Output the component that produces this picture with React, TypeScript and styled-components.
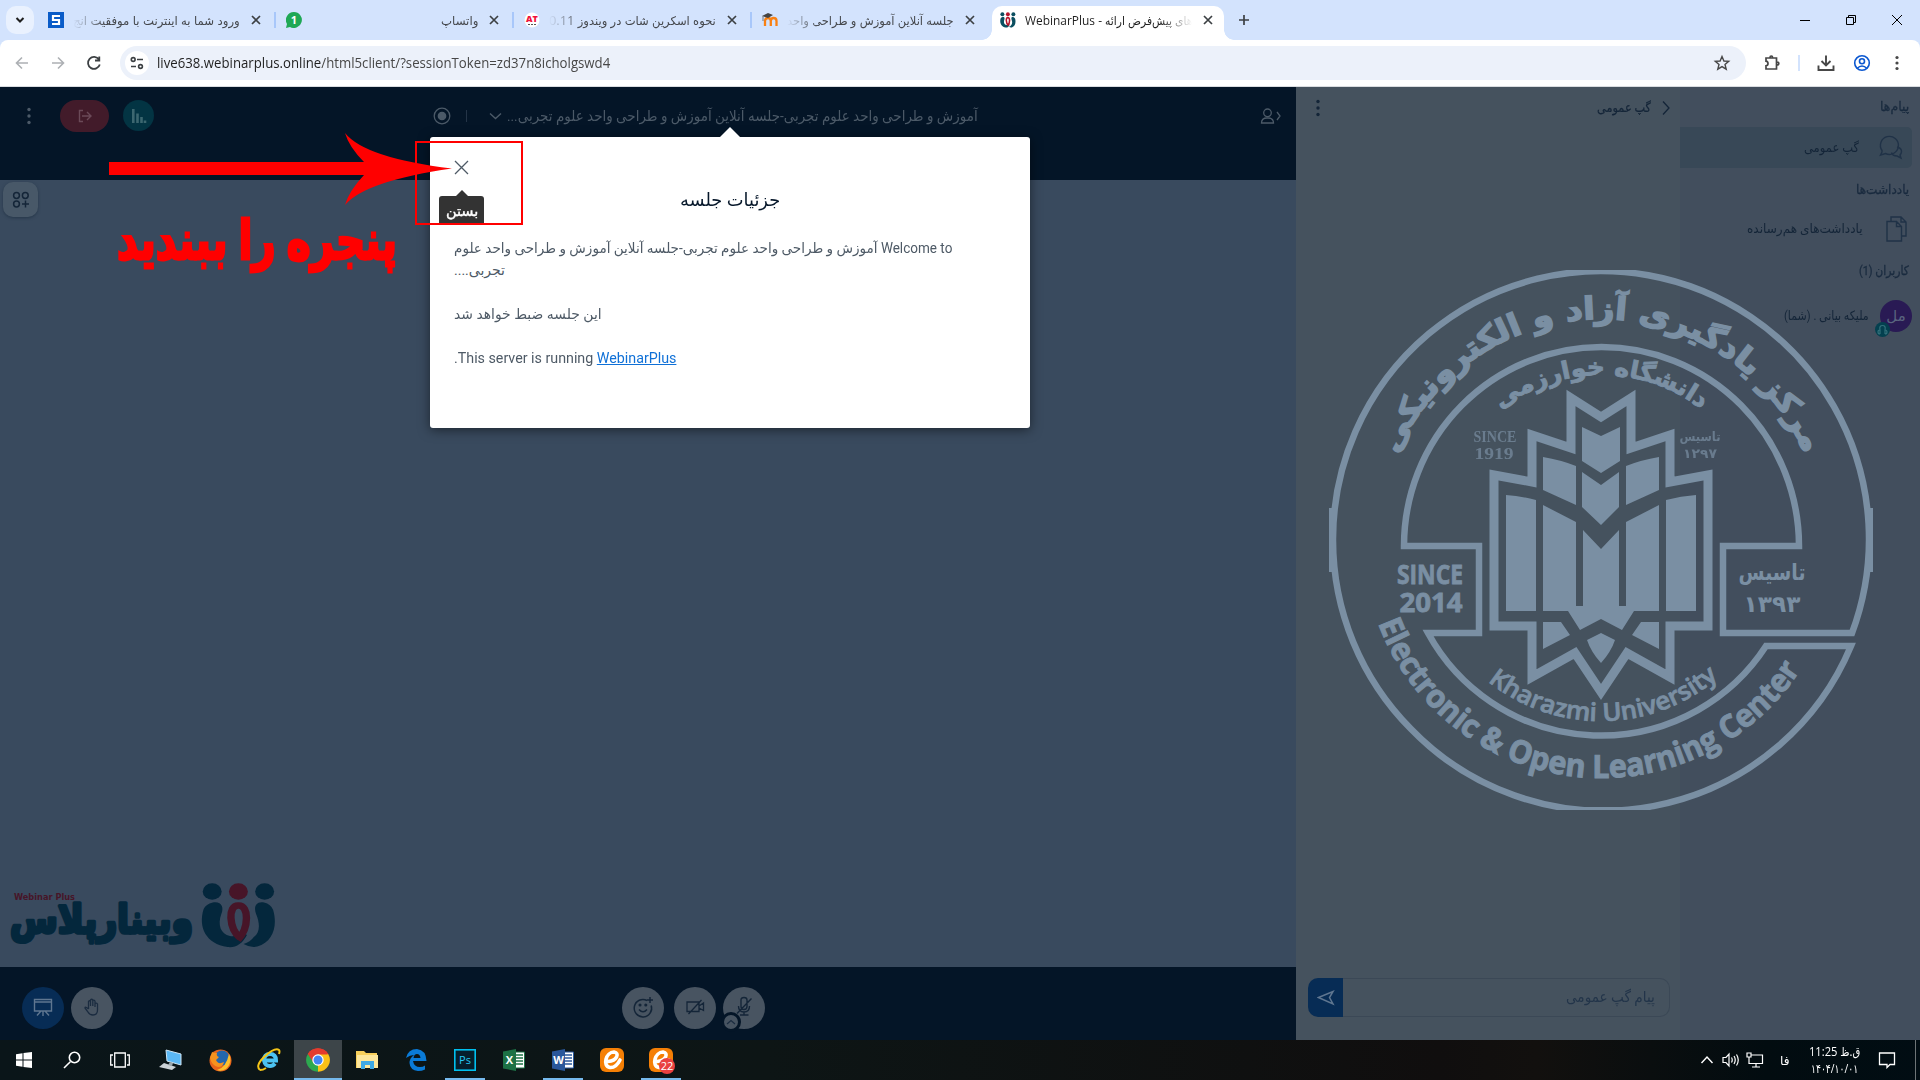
import React, { useLayoutEffect, useRef, useState } from "react";
import styled, { createGlobalStyle, css } from "styled-components";

const uiFont = `"Open Sans", "DejaVu Sans Condensed", "DejaVu Sans", sans-serif`;
const appFont = `Roboto, "DejaVu Sans", sans-serif`;

const c = {
  navy: "#041527",
  stage: "#394a5e",
  chat: "#45525e",
  users: "#424e5d",
  dimText: "#4c5a68",
  ink: "#142538",
  mark: "#7a8fa3",
  teal: "#04273c",
  wine: "#471528",
  blue: "#072c55",
  red: "#ff0000",
};

const Global = createGlobalStyle`
  html, body { margin: 0; padding: 0; overflow: hidden; }
  *, *::before, *::after { box-sizing: border-box; }
  svg { display: block; flex: none; }
`;

/* ---------- text set to an exact measure ---------- */
const FitBox = styled.span<{ $w: number }>`
  display: block;
  flex: none;
  direction: ltr;
  width: ${(p) => p.$w}px;
  white-space: nowrap;
`;
const FitInner = styled.span`
  display: inline-block;
  white-space: pre;
  transform-origin: 0 50%;
`;
function Fit({ w, dir = "rtl", children }: { w: number; dir?: "rtl" | "ltr"; children: React.ReactNode }) {
  const ref = useRef<HTMLSpanElement>(null);
  const [scale, setScale] = useState(1);
  useLayoutEffect(() => {
    if (ref.current) setScale(w / ref.current.offsetWidth);
  }, [w]);
  return (
    <FitBox $w={w}>
      <FitInner ref={ref} dir={dir} style={{ transform: `scaleX(${scale})` }}>
        {children}
      </FitInner>
    </FitBox>
  );
}

/* ---------- page ---------- */
const Screen = styled.div`
  position: relative;
  display: flex;
  flex-direction: column;
  width: 1920px;
  height: 1080px;
  overflow: hidden;
  font-family: ${appFont};
`;

/* ---------- browser ---------- */
const TabStrip = styled.div`
  display: flex;
  align-items: center;
  height: 40px;
  padding-left: 6px;
  background: #d3e3fd;
  font: 12px/20px ${uiFont};
  color: #45484d;
`;
const TabSearch = styled.div`
  display: grid;
  place-items: center;
  width: 28px;
  height: 28px;
  margin-right: 4px;
  border-radius: 10px;
  background: #e9f1fe;
`;
const Tab = styled.div<{ $last?: boolean }>`
  display: flex;
  align-items: center;
  flex: none;
  width: 238px;
  height: 16px;
  padding-left: 10px;
  border-right: 2px solid ${(p) => (p.$last ? "transparent" : "#a8c7fa")};
`;
const ActiveTab = styled.div`
  position: relative;
  display: flex;
  align-items: center;
  align-self: flex-end;
  width: 232px;
  height: 34px;
  margin-left: 2px;
  padding: 0 0 6px 8px;
  border-radius: 10px 10px 0 0;
  background: #fff;
  color: #1f1f1f;
  &::before,
  &::after {
    content: "";
    position: absolute;
    bottom: 0;
    width: 10px;
    height: 10px;
  }
  &::before {
    left: -10px;
    background: radial-gradient(circle at 0 0, transparent 9.5px, #fff 10px);
  }
  &::after {
    right: -10px;
    background: radial-gradient(circle at 100% 0, transparent 9.5px, #fff 10px);
  }
`;
const TabTitle = styled.div<{ $fade?: "left" | "right" }>`
  display: flex;
  justify-content: flex-end;
  width: 167px;
  margin: 0 8px 0 9px;
  padding-top: 1px;
  overflow: hidden;
  ${(p) =>
    p.$fade &&
    css`
      mask-image: linear-gradient(to ${p.$fade === "left" ? "right" : "left"}, transparent, #000 32px);
    `}
`;
const NewTab = styled.div`
  margin-left: 12px;
`;
const WindowButtons = styled.div`
  display: flex;
  align-items: center;
  gap: 34px;
  margin-left: auto;
  padding-right: 17px;
`;
const Toolbar = styled.div`
  display: flex;
  align-items: center;
  height: 47px;
  padding: 0 0 1px 12px;
  border-bottom: 1px solid #d9dce0;
  border-radius: 8px 8px 0 0;
  background: #fff;
`;
const ToolbarBack = styled.div`
  background: #d3e3fd;
`;
const NavButtons = styled.div`
  display: flex;
  gap: 16px;
  width: 108px;
`;
const Omnibox = styled.div`
  display: flex;
  align-items: center;
  width: 1626px;
  height: 34px;
  padding: 0 15px 0 5px;
  border-radius: 17px;
  background: #ecf1fa;
  font: 14px/20px ${uiFont};
  color: #1f1f1f;
`;
const SiteInfo = styled.div`
  display: grid;
  place-items: center;
  width: 24px;
  height: 24px;
  margin-right: 8px;
  border-radius: 50%;
  background: #fff;
`;
const UrlPath = styled.span`
  color: #474747;
`;
const Push = styled.div`
  flex: 1;
`;
const ToolbarIcons = styled.div`
  display: flex;
  align-items: center;
  gap: 16px;
  padding-left: 16px;
`;
const ToolbarRule = styled.i`
  width: 2px;
  height: 16px;
  background: #d3e3fd;
`;

/* ---------- conference ---------- */
const Conference = styled.main`
  display: grid;
  grid-template-columns: 1296px 384px 240px;
  height: 953px;
`;
const Stage = styled.section`
  display: grid;
  grid-template-rows: 93px 787px 73px;
  background: ${c.stage};
`;
const Header = styled.header`
  display: flex;
  align-items: center;
  height: 93px;
  padding: 0 14px 36px 20px;
  background: ${c.navy};
  color: ${c.dimText};
  font-size: 15px;
  line-height: 20px;
`;
const LeavePill = styled.div`
  display: grid;
  place-items: center;
  width: 49px;
  height: 32px;
  margin: 0 14px 0 22px;
  border-radius: 16px;
  background: #421b2a;
`;
const StatsButton = styled.div`
  display: grid;
  place-items: center;
  width: 31px;
  height: 31px;
  margin-right: 279px;
  border-radius: 50%;
  background: #033443;
`;
const HeaderRule = styled.i`
  width: 1px;
  height: 12px;
  margin: 0 21px 0 15px;
  background: #243447;
`;
const Whiteboard = styled.div`
  display: flex;
  flex-direction: column;
  justify-content: space-between;
  align-items: flex-start;
  padding: 2px 0 16px 3px;
`;
const AddButton = styled.div`
  display: grid;
  place-items: center;
  width: 35px;
  height: 35px;
  border-radius: 10px;
  background: #485868;
  box-shadow: 0 1px 3px #26374a;
`;
const ActionBar = styled.footer`
  display: flex;
  align-items: center;
  padding: 9px 0 0 22px;
  background: ${c.navy};
`;
const RoundButton = styled.div<{ $gap: number; $primary?: boolean }>`
  position: relative;
  display: grid;
  place-items: center;
  width: 42px;
  height: 42px;
  margin-right: ${(p) => p.$gap}px;
  border-radius: 50%;
  background: ${(p) => (p.$primary ? c.blue : "#485461")};
  & > svg {
    margin-bottom: 2px;
  }
`;
const MicMenu = styled.div`
  position: absolute;
  left: -2px;
  bottom: -3px;
  display: grid;
  place-items: center;
  width: 20px;
  height: 20px;
  border: 3px solid ${c.navy};
  border-radius: 50%;
  background: #485461;
`;

const ChatPanel = styled.section`
  display: flex;
  flex-direction: column;
  justify-content: space-between;
  padding: 10px 8px 23px 12px;
  background: ${c.chat};
`;
const ChatHeader = styled.div`
  display: flex;
  align-items: center;
  justify-content: space-between;
  height: 22px;
  padding-left: 1px;
  color: ${c.ink};
  font: 13px/20px ${appFont};
`;
const ChatTitle = styled.div`
  display: flex;
  align-items: center;
  gap: 9px;
  -webkit-text-stroke: 0.2px ${c.ink};
`;
const ChatForm = styled.div`
  display: flex;
  width: 362px;
  height: 39px;
`;
const SendButton = styled.div`
  display: grid;
  place-items: center;
  width: 35px;
  border-radius: 10px 0 0 10px;
  background: ${c.blue};
`;
const ChatInput = styled.div`
  display: flex;
  flex: 1;
  align-items: center;
  justify-content: flex-end;
  padding: 0 14px 2px 0;
  border: 1px solid #3b4856;
  border-left: 0;
  border-radius: 0 10px 10px 0;
  color: #23354a;
  font-size: 15px;
`;

const UserPanel = styled.aside`
  display: flex;
  flex-direction: column;
  background: ${c.users};
  color: ${c.ink};
  font-size: 13px;
  line-height: 20px;
`;
const SectionTitle = styled.div<{ $top: number; $bottom: number }>`
  display: flex;
  justify-content: flex-end;
  margin: ${(p) => p.$top}px 11px ${(p) => p.$bottom}px 0;
  color: #1a2b3f;
  -webkit-text-stroke: 0.3px #1a2b3f;
`;
const ListRow = styled.div<{ $active?: boolean; $gap: number; $right: number }>`
  display: flex;
  align-items: center;
  justify-content: flex-end;
  gap: ${(p) => p.$gap}px;
  height: 41px;
  margin-right: 8px;
  padding-right: ${(p) => p.$right}px;
  border-radius: 0 5px 5px 0;
  background: ${(p) => (p.$active ? "#384857" : "transparent")};
`;
const Avatar = styled.div`
  position: relative;
  display: grid;
  place-items: center;
  width: 32px;
  height: 32px;
  border-radius: 50%;
  background: #291a54;
  color: #59647f;
  font-size: 15px;
`;
const AudioBadge = styled.div`
  position: absolute;
  left: -5px;
  bottom: -5px;
  display: grid;
  place-items: center;
  width: 15px;
  height: 15px;
  border-radius: 50%;
  background: #04404f;
`;

/* ---------- layers over the page ---------- */
const Watermark = styled.svg`
  position: absolute;
  left: 1329px;
  top: 270px;
`;
const Dialog = styled.div`
  position: absolute;
  left: 430px;
  top: 137px;
  width: 600px;
  height: 291px;
  padding: 20px 24px;
  border-radius: 3px;
  background: #fff;
  box-shadow: 0 2px 12px rgba(0, 0, 0, 0.5);
  color: #4e5a66;
  font-size: 14px;
  line-height: 22px;
  & > svg {
    margin-left: -3px;
  }
  &::before {
    content: "";
    position: absolute;
    left: 290px;
    top: -10px;
    border: 10px solid transparent;
    border-top: 0;
    border-bottom-color: #fff;
  }
`;
const DialogTitle = styled.h1`
  display: flex;
  justify-content: center;
  margin: 10px 0 25px;
  color: #06172a;
  font: 400 18px/24px ${appFont};
`;
const Blank = styled.div`
  height: 22px;
`;
const Link = styled.a`
  color: #0f70d7;
  text-decoration: underline;
`;
const Tip = styled.div`
  position: absolute;
  left: 9px;
  top: 59px;
  display: grid;
  place-items: center;
  width: 45px;
  height: 27px;
  padding-top: 2px;
  border-radius: 3px 3px 0 0;
  background: #333;
  color: #fff;
  font-size: 14px;
  -webkit-text-stroke: 0.4px #fff;
  &::before {
    content: "";
    position: absolute;
    left: 16px;
    top: -6px;
    border: 7px solid transparent;
    border-top: 0;
    border-bottom-color: #333;
  }
`;
const Frame = styled.div`
  position: absolute;
  left: 415px;
  top: 141px;
  width: 108px;
  height: 84px;
  border: 2px solid ${c.red};
`;
const RedArrow = styled.svg`
  position: absolute;
  left: 109px;
  top: 133px;
`;
const Caption = styled.div`
  position: absolute;
  left: 117px;
  top: 202px;
  color: ${c.red};
  font: bold 54px/78px "DejaVu Sans", sans-serif;
  word-spacing: -4px;
  -webkit-text-stroke: 3px ${c.red};
`;

/* ---------- taskbar ---------- */
const Taskbar = styled.footer`
  display: flex;
  align-items: stretch;
  height: 40px;
  background: linear-gradient(90deg, #0a1519, #0d1515 40%, #100e0e 75%, #12100e 80%, #020c10 92%, #010d13);
  color: #fff;
  font: 12px/17px ${uiFont};
`;
const Task = styled.div<{ $open?: boolean; $active?: boolean; $after?: number }>`
  display: grid;
  place-items: center;
  width: ${(p) => (p.$active ? 48 : 40)}px;
  margin: 0 ${(p) => p.$after ?? (p.$active ? 1 : 5)}px 0 ${(p) => (p.$active ? 0 : 4)}px;
  background: ${(p) => (p.$active ? "#3d4549" : "transparent")};
  border-bottom: 2px solid ${(p) => (p.$open ? "#76b9ed" : "transparent")};
  border-top: 2px solid transparent;
`;
const Tray = styled.div`
  display: flex;
  align-items: center;
  margin-left: auto;
`;
const Cell = styled.div<{ $w: number }>`
  display: flex;
  flex-direction: column;
  align-items: center;
  width: ${(p) => p.$w}px;
`;
const Clock = styled(Cell)`
  margin-left: -1px;
  margin-right: 1px;
`;
const ShowDesktop = styled.i`
  width: 5px;
  height: 40px;
  border-left: 1px solid #6d7476;
`;

/* ---------- drawings ---------- */
const Cross = ({ size = 8, color = "#3c4043", w = 1.7 }) => (
  <svg width={size + 8} height={size + 8} viewBox={`-4 -4 ${size + 8} ${size + 8}`} stroke={color} strokeWidth={w}>
    <path d={`M0 0L${size} ${size}M${size} 0L0 ${size}`} />
  </svg>
);
const Dots = ({ color, r = 1.7, gap = 6.5 }: { color: string; r?: number; gap?: number }) => (
  <svg width="18" height="20" viewBox="-9 -10 18 20" fill={color}>
    <circle r={r} cy={-gap} />
    <circle r={r} />
    <circle r={r} cy={gap} />
  </svg>
);
const Line = ({ d, w = 20, h = 20, s = 1.5, color, children }: any) => (
  <svg width={w} height={h} viewBox={`0 0 ${w} ${h}`} fill="none" stroke={color} strokeWidth={s}>
    <path d={d} />
    {children}
  </svg>
);

const Emblem = ({ a, b }: { a: string; b: string }) => (
  <>
    <circle cx="8.500" cy="8.500" r="8.300" fill={a} />
    <circle cx="31.500" cy="8.500" r="8.300" fill={b} />
    <circle cx="54.500" cy="8.500" r="8.300" fill={a} />
    <path
      fill={a}
      d="M9 19.500C17 18 19 25 16.500 31C13 42 16 51 24 53C28 54 32 52 34 48L39 52C35 61 29 65 22 64C3 61-4 44 1 26Q3 21 9 19.500Z"
    />
    <path
      fill={a}
      d="M54 19.500C46 18 45 25 47 31C51 42 50 50 45 54Q42 59 36 61Q42 65 48 63.500C62 59 66 43 62 27Q60 21 54 19.500Z"
    />
    <path d="M33 55C23 45 22 22 31.500 22.500C41 22 41 45 31 57" fill="none" stroke={b} strokeWidth="6.500" />
  </>
);

const PersianMark = () => (
  <svg width="276" height="68" viewBox="0 0 276 68">
    <text
      x="7"
      y="50"
      direction="ltr"
      fontFamily="DejaVu Sans"
      fontWeight="700"
      fontSize="40"
      fill={c.teal}
      stroke={c.teal}
      strokeWidth="3.500"
      strokeLinejoin="round"
      textLength="183"
      lengthAdjust="spacingAndGlyphs"
    >
      وبینارپلاس
    </text>
    <text x="11" y="17" fontFamily="DejaVu Sans" fontWeight="700" fontSize="8" fill={c.wine} textLength="61" lengthAdjust="spacingAndGlyphs">
      Webinar Plus
    </text>
    <g transform="translate(199.500,0) scale(1.14,1)">
      <Emblem a={c.teal} b={c.wine} />
    </g>
  </svg>
);

const arabic = { fontFamily: "DejaVu Sans", fontWeight: 700 };
const Seal = () => (
  <Watermark width="544" height="540" viewBox="-272 -270 544 540" fill={c.mark} textAnchor="middle">
    <defs>
      <path id="ring-top" d="M-221 0A221 221 0 0 1 221 0" />
      <path id="ring-inner" d="M-165 0A165 165 0 0 1 165 0" />
      <path id="ring-bottom" d="M-238 0A238 238 0 0 0 238 0" />
      <path id="ring-uni" d="M-181 0A181 181 0 0 0 181 0" />
    </defs>
    <g fill="none" stroke={c.mark}>
      <path
        strokeWidth="6.500"
        d="M198 6H122V93H251A268 268 0 1 0-268 0A268 268 0 0 0-190 189A268 268 0 0 0 250 106H165A197 197 0 0 1-173 93H-122V6H-197A197.500 199 0 0 1 198 6Z"
      />
      <path
        strokeWidth="9"
        d="M0-123L30-142V-92L69-105V-58L107-65V86H69V137L26 113L0 152L-26 113L-69 137V86H-107V-65L-69-58V-105L-30-92V-142Z"
      />
    </g>
    <path d="M-29-270H31V-266H-29ZM-29 267H31V270H-29ZM-272-32H-267V32H-272ZM267-32H272V32H267Z" />
    <path d="M-19-113L0-104L19-113V-79L0-67L-19-79ZM-19-68L0-55L18-68V-33L0-15L-19-33ZM-58-83Q-40-80-25-74V-35L-58-50ZM58-83Q40-80 25-74V-35L58-50ZM-95-45Q-80-44-65-40V71H-95ZM95-45Q80-44 65-40V71H95Z" />
    <path d="M-58-35L-25-18V66H-18V-10L0 9L18-10V66H25V-18L58-35V71H33L21 90L0 79L-21 90L-33 71H-58Z" />
    <path d="M-58 82H-40L-31 95L-58 109ZM58 82H40L31 95L58 109ZM0 93L14 100Q10 112 0 123Q-10 112-14 100Z" />
    <text {...arabic} fontSize="31" stroke={c.mark} strokeWidth="1.600" textLength="518" lengthAdjust="spacingAndGlyphs">
      <textPath href="#ring-top" startOffset="50%">مرکز یادگیری آزاد و الکترونیکی</textPath>
    </text>
    <text {...arabic} fontSize="24" stroke={c.mark} strokeWidth="0.900" textLength="216" lengthAdjust="spacingAndGlyphs">
      <textPath href="#ring-inner" startOffset="50%">دانشگاه خوارزمی</textPath>
    </text>
    <text fontFamily="Open Sans" fontWeight="700" fontSize="32" stroke={c.mark} strokeWidth="1" textLength="525" lengthAdjust="spacingAndGlyphs">
      <textPath href="#ring-bottom" startOffset="46.500%">Electronic &amp; Open Learning Center</textPath>
    </text>
    <text fontFamily="Open Sans" fontWeight="600" fontSize="25" stroke={c.mark} strokeWidth="0.800" textLength="250" lengthAdjust="spacingAndGlyphs">
      <textPath href="#ring-uni" startOffset="50.500%">Kharazmi University</textPath>
    </text>
    <g fontFamily="Open Sans" fontWeight="700" fontSize="26" stroke={c.mark} strokeWidth="0.800">
      <text x="-171" y="44" textLength="66" lengthAdjust="spacingAndGlyphs">SINCE</text>
      <text x="-170" y="72" textLength="63" lengthAdjust="spacingAndGlyphs">2014</text>
    </g>
    <g {...arabic} fontSize="23">
      <text x="171" y="40" textLength="67" lengthAdjust="spacingAndGlyphs">تاسیس</text>
      <text x="171" y="72" textLength="57" lengthAdjust="spacingAndGlyphs">۱۳۹۳</text>
    </g>
    <g opacity="0.7" fontFamily="Liberation Serif" fontWeight="700" fontSize="17">
      <text x="-106" y="-98" textLength="43" lengthAdjust="spacingAndGlyphs">SINCE</text>
      <text x="-107" y="-81" textLength="39" lengthAdjust="spacingAndGlyphs">1919</text>
      <text x="99" y="-99" fontFamily="DejaVu Sans" fontSize="13" textLength="41" lengthAdjust="spacingAndGlyphs">تاسیس</text>
      <text x="99" y="-82" fontFamily="DejaVu Sans" fontSize="13" textLength="34" lengthAdjust="spacingAndGlyphs">۱۲۹۷</text>
    </g>
  </Watermark>
);

const Office = ({ color, letter }: { color: string; letter: string }) => (
  <svg width="22" height="22" viewBox="0 0 22 22">
    <path d="M12 3H21.500V19H12" fill="#fff" stroke={color} />
    <path d="M13 6H20M13 9H20M13 12H20M13 15H20" stroke={color} strokeWidth="1.500" />
    <path d="M0 2.500L13 0V22L0 19.500Z" fill={color} />
    <text x="6.500" y="15" textAnchor="middle" fontFamily="Open Sans" fontSize="11" fontWeight="700" fill="#fff">{letter}</text>
  </svg>
);
const OrangeE = ({ badge }: { badge?: boolean }) => (
  <svg width="24" height="26" viewBox="0 0 24 26" overflow="visible">
    <rect y="1" width="24" height="24" rx="6" fill="#f57f05" />
    <path d="M8 14.500C17 14 20 6 14 5C6 5 2 19 10 20.500Q16 21 20 13" fill="none" stroke="#fff" strokeWidth="3.600" strokeLinecap="round" />
    {badge && (
      <>
        <circle cx="18" cy="19" r="8" fill="#e94040" />
        <text x="18" y="23" textAnchor="middle" fontFamily="Open Sans" fontSize="11" fill="#fff">22</text>
      </>
    )}
  </svg>
);

const Browser = () => (
  <>
    <TabStrip>
      <TabSearch>
        <Line w={10} h={8} s={2} color="#1f1f1f" d="M1.500 2L5 5.500L8.500 2" />
      </TabSearch>
      <Tab>
        <svg width="16" height="16">
          <rect width="16" height="16" fill="#0a5cc8" />
          <path d="M12 4H5V8H11V12H4" fill="none" stroke="#fff" strokeWidth="2.200" />
        </svg>
        <TabTitle $fade="left"><Fit w={167}>ورود شما به اینترنت با موفقیت انج</Fit></TabTitle>
        <Cross />
      </Tab>
      <Tab>
        <svg width="16" height="16">
          <path d="M8 0A8 8 0 1 1 4 15L0 16L1 12A8 8 0 0 1 8 0Z" fill="#1fa855" />
          <text x="8" y="12" textAnchor="middle" fontSize="11" fontWeight="700" fill="#fff">1</text>
        </svg>
        <TabTitle><Fit w={37}>واتساپ</Fit></TabTitle>
        <Cross />
      </Tab>
      <Tab>
        <svg width="16" height="16">
          <circle cx="8" cy="8" r="7.500" fill="#fff" />
          <text x="8" y="10" textAnchor="middle" fontSize="9" fontWeight="800" fill="#f0123c">AT</text>
          <path d="M4 12.500H12" stroke="#555" strokeDasharray="2 1" />
        </svg>
        <TabTitle $fade="left"><Fit w={167}>نحوه اسکرین شات در ویندوز 0.11</Fit></TabTitle>
        <Cross />
      </Tab>
      <Tab $last>
        <svg width="16" height="16">
          <path d="M3 14V8.500Q3.500 6 6 6Q8.800 6 8.800 9V14V9Q9 6 11.500 6Q14.500 6 14.500 9V14" fill="none" stroke="#f98012" strokeWidth="2.300" />
          <path d="M0 4L6 1L11 3L6 6Z" fill="#444" />
          <path d="M1 4V9" stroke="#777" />
        </svg>
        <TabTitle $fade="left"><Fit w={167}>جلسه آنلاین آموزش و طراحی واحد</Fit></TabTitle>
        <Cross />
      </Tab>
      <ActiveTab>
        <svg width="16" height="16" viewBox="-1 -1 66 67"><Emblem a="#0b4f60" b="#b5152b" /></svg>
        <TabTitle $fade="right"><Fit w={167} dir="ltr">WebinarPlus - های پیش‌فرض ارائه</Fit></TabTitle>
        <Cross />
      </ActiveTab>
      <NewTab><Line w={16} h={16} s={1.700} color="#3c4043" d="M8 3V13M3 8H13" /></NewTab>
      <WindowButtons>
        <Line w={12} h={12} s={1} color="#000" d="M1 6.500H11" />
        <Line w={12} h={12} s={1} color="#000" d="M1.500 3.500H8.500V10.500H1.500ZM3.500 3.500V1.500H10.500V8.500H8.500" />
        <Line w={12} h={12} s={1} color="#000" d="M1 1L11 11M11 1L1 11" />
      </WindowButtons>
    </TabStrip>
    <ToolbarBack>
      <Toolbar>
        <NavButtons>
          <Line color="#adb0b4" s={1.600} d="M16 10H4.500M10 4.500L4.500 10L10 15.500" />
          <Line color="#adb0b4" s={1.600} d="M4 10H15.500M10 4.500L15.500 10L10 15.500" />
          <Line color="#3c4043" s={1.800} d="M15 6.500A6 6 0 1 0 15.800 11.500M15.300 3.500V7.500H11" />
        </NavButtons>
        <Omnibox>
          <SiteInfo>
            <Line w={14} h={14} s={1.600} color="#3c4043" d="M7 3.500H13M1 10.500H6"><circle cx="3.200" cy="3.500" r="1.900" /><circle cx="10.500" cy="10.500" r="1.900" /></Line>
          </SiteInfo>
          <Fit w={453} dir="ltr">live638.webinarplus.online<UrlPath>/html5client/?sessionToken=zd37n8icholgswd4</UrlPath></Fit>
          <Push />
          <Line w={18} h={18} s={1.400} color="#474747" d="M9 2.500L10.900 7L15.700 7.400L12 10.500L13.200 15.200L9 12.600L4.800 15.200L6 10.500L2.300 7.400L7.100 7Z" />
        </Omnibox>
        <ToolbarIcons>
          <Line color="#474747" s={1.700} d="M4 5H14.500V16H4V12.800Q6 12.500 6 10.500Q6 8.500 4 8.200ZM8 4.500Q8 3 9.300 3Q10.600 3 10.600 4.500M15 9Q16.800 9 16.800 10.500Q16.800 12 15 12" />
          <ToolbarRule />
          <Line color="#474747" s={1.900} d="M10 2.500V12M5.500 8L10 12.500L14.500 8M2.500 12.500V17H17.500V12.500" />
          <Line color="#0b57d0" s={1.600} d="M5 15.500Q10 10.500 15 15.500"><circle cx="10" cy="10" r="7.300" /><circle cx="10" cy="8.300" r="2.500" /></Line>
          <Dots color="#474747" r={1.600} gap={5.500} />
        </ToolbarIcons>
      </Toolbar>
    </ToolbarBack>
  </>
);

export default function App() {
  return (
    <Screen>
      <Global />
      <Browser />
      <Conference>
        <Stage>
          <Header>
            <Dots color={c.dimText} />
            <LeavePill><Line w={16} h={16} s={1.400} color="#6b4a58" d="M6 2.500H2.500V13.500H6M5 8H14M10 4L14 8L10 12" /></LeavePill>
            <StatsButton><Line w={18} h={18} s={2.600} color="#3c6770" d="M3.300 2V16M7.500 6.500V16M11.500 10V16M15 13.500V16" /></StatsButton>
            <Line w={18} h={18} s={1.300} color={c.dimText} d=""><circle cx="9" cy="9" r="7.800" /><circle cx="9" cy="9" r="3.700" fill={c.dimText} /></Line>
            <HeaderRule />
            <Line w={19} h={14} s={1.400} color={c.dimText} d="M2 4.500L7.500 9.500L13 4.500" />
            <Fit w={471}>آموزش و طراحی واحد علوم تجربی-جلسه آنلاین آموزش و طراحی واحد علوم تجربی...</Fit>
            <Push />
            <Line w={22} h={20} s={1.300} color={c.dimText} d="M1.500 17Q1.500 12 7 12H8Q13.500 12 13.500 17ZM17 6L20 10L17 14"><circle cx="7.500" cy="6.800" r="3.800" /></Line>
          </Header>
          <Whiteboard>
            <AddButton><Line w={18} h={18} s={1.500} color="#142538" d="M13.500 9.500V16.500M10 13H17"><circle cx="4.500" cy="4.500" r="2.900" /><circle cx="13.300" cy="4.500" r="2.900" /><circle cx="4.500" cy="13" r="2.900" /></Line></AddButton>
            <PersianMark />
          </Whiteboard>
          <ActionBar>
            <RoundButton $gap={7} $primary>
              <Line w={20} h={20} s={1.400} color="#5f7690" d="M1.500 2.500H18.500V14H1.500ZM1.500 5H18.500M10 14V19M8 14L4 18.500M12 14L16 18.500" />
            </RoundButton>
            <RoundButton $gap={509}>
              <Line w={20} h={20} s={1.300} color="#1b2c40" d="M6.500 12V4.500Q7.500 3 8.500 4.500V9V3Q9.700 1.500 10.800 3V9V3.500Q12 2.500 13 4V10V6.500Q14.500 5.500 15.500 7V13Q15.500 18 11 18Q7.500 18 6 15L3 11Q3 9 6.500 12" />
            </RoundButton>
            <RoundButton $gap={10}>
              <Line w={22} h={22} s={1.500} color="#142538" d="M15 4.500A8.700 8.700 0 1 0 19.200 9.500M18 1V7M15 4H21M7 13.500Q11 18 15 13.500"><circle cx="8" cy="9" r=".8" /><circle cx="13.800" cy="9" r=".8" /></Line>
            </RoundButton>
            <RoundButton $gap={7}>
              <Line w={20} h={20} s={1.300} color="#142538" d="M2 5H14V14.500H2ZM14 9L18.500 6V13.500L14 11M3.500 17L16.500 3" />
            </RoundButton>
            <RoundButton $gap={0}>
              <Line w={22} h={22} s={1.400} color="#142538" d="M8 4Q8 1.500 11 1.500Q14 1.500 14 4V10.500Q14 13.500 11 13.500Q8 13.500 8 10.500ZM5.500 10Q5.500 16 11 16Q16.500 16 16.500 10M11 16V19M7 19H15.500M4 17.500L18.500 2.500" />
              <MicMenu><Line w={10} h={8} s={1.200} color="#1b2c40" d="M1 6L5 2.500L9 6" /></MicMenu>
            </RoundButton>
          </ActionBar>
        </Stage>

        <ChatPanel>
          <ChatHeader>
            <Dots color={c.ink} />
            <ChatTitle>
              <Fit w={54}>گپ عمومی</Fit>
              <Line w={12} h={16} s={1.300} color={c.ink} d="M3 1.500L9 8L3 14.500" />
            </ChatTitle>
          </ChatHeader>
          <ChatForm>
            <SendButton><Line w={18} h={16} s={1.500} color="#5f7690" d="M1.500 7.500L16 1.500L12.500 7.500L16 14Z" /></SendButton>
            <ChatInput><Fit w={89}>پیام گپ عمومی</Fit></ChatInput>
          </ChatForm>
        </ChatPanel>

        <UserPanel>
          <SectionTitle $top={10} $bottom={10}><Fit w={29}>پیام‌ها</Fit></SectionTitle>
          <ListRow $active $gap={18} $right={8}>
            <Fit w={55}>گپ عمومی</Fit>
            <Line w={27} h={28} s={1.400} color="#203247" d="M5 18L3.500 21L8.500 19.500A9 9 0 1 0 5 16.500ZM20 13Q24.500 14 24.500 17.500Q24.500 19.500 23 21L24 24L20 22Q15.500 22 14.500 18.500" />
          </ListRow>
          <SectionTitle $top={12} $bottom={8}><Fit w={53}>یادداشت‌ها</Fit></SectionTitle>
          <ListRow $gap={23} $right={5}>
            <Fit w={116}>یادداشت‌های هم‌رسانده</Fit>
            <Line w={21} h={26} s={1.400} color="#203247" d="M1 5.500H10.500L15.500 10.500V25H1ZM10.500 5.500V10.500H15.500M5 5.500V1H15L20 6V20H15.500M15 1V6H20" />
          </ListRow>
          <SectionTitle $top={12} $bottom={14}><Fit w={50}>کاربران (1)</Fit></SectionTitle>
          <ListRow $gap={11} $right={0}>
            <Fit w={85}>ملیکه بیانی . (شما)</Fit>
            <Avatar>
              مل
              <AudioBadge><Line w={11} h={11} s={1.200} color="#32707b" d="M3 10V6Q2 1.500 5.500 1.500Q9 1.500 8 6V10M3 6Q1 6 1 8T3 10M8 6Q10 6 10 8T8 10" /></AudioBadge>
            </Avatar>
          </ListRow>
        </UserPanel>
      </Conference>

      <Taskbar>
        <Task $after={4}><svg width="16" height="16" fill="#fff"><path d="M0 2.200L6.500 1.200V7.500H0ZM7.500 1L16 0V7.500H7.500ZM0 8.500H6.500V14.800L0 13.800ZM7.500 8.500H16V16L7.500 15Z" /></svg></Task>
        <Task $after={4}><Line w={18} h={18} s={1.600} color="#fff" d="M7.300 10.700L1 17"><circle cx="11.500" cy="6.500" r="5.200" /></Line></Task>
        <Task $after={7}><Line w={20} h={16} s={1.300} color="#fff" d="M4.700 1H15.300V15H4.700ZM3 3H.7V13H3M17 3H19.300V13H17" /></Task>
        <Task>
          <svg width="24" height="22"><path d="M7 1L22 5V16L8 12Z" fill="#5bb8f5" stroke="#cfe6f5" /><path d="M5 14L17 18L13 21L0 18Z" fill="#cbd2d7" /><path d="M11 13L14 14L13 17L9 16Z" fill="#9aa6ad" /></svg>
        </Task>
        <Task>
          <svg width="23" height="23"><circle cx="11.500" cy="11.500" r="11" fill="#e8641b" /><circle cx="13" cy="9" r="7.500" fill="#2467ad" /><path d="M3 3Q5 4 8 4Q7 7 10 8L7 11Q9 16 15 13Q14 18 9 18Q3 17 1 9Z" fill="#f6921e" /><path d="M20 5Q24 13 17 20Q12 23 8 21Q17 19 20 5Z" fill="#fbc02d" /></svg>
        </Task>
        <Task>
          <svg width="24" height="24" fill="none"><path d="M7 12.500H19Q19 6 13 6Q7 6 7 12.500Q8 18 13 18Q16 18 18 15.500" stroke="#4cc3f2" strokeWidth="4" /><path d="M3 22Q-2 18 7 9Q18-1 22 2Q23 3 22 6M3 22Q6 22 9 20" stroke="#f5c518" strokeWidth="2" /></svg>
        </Task>
        <Task $active $open>
          <svg width="24" height="24" viewBox="-12 -12 24 24"><path d="M0 0L-10.200-6A11.800 11.800 0 0 1 10.200-6Z" fill="#e33b2e" /><path d="M0 0L10.200-6A11.800 11.800 0 0 1 0 11.800Z" fill="#fbc116" /><path d="M0 0L0 11.800A11.800 11.800 0 0 1-10.200-6Z" fill="#2da94f" /><path d="M0-5.500H10.200L5 3Z" fill="#fbc116" /><path d="M-10.200-6H0V-5L-5 3Z" fill="#2da94f" /><path d="M-10.200-6A11.800 11.800 0 0 1 10.200-6H0L-5 2Z" fill="#e33b2e" /><circle r="5.700" fill="#fff" /><circle r="4.500" fill="#4285f4" /></svg>
        </Task>
        <Task>
          <svg width="22" height="20"><path d="M0 1H8L10 3H21V18H0Z" fill="#f7cf5b" /><path d="M1 5H22V18H1Z" fill="#fde79c" /><path d="M5 19V11H18V19H14V15H9V19Z" fill="#3ea9e5" /></svg>
        </Task>
        <Task>
          <svg width="21" height="22"><path d="M0 9Q2 0 11 0Q20 1 20.500 12H7Q8 18 14 18Q17 18 19 16.500V20.500Q16 22 12 22Q4 21 3.500 14Q3.500 9 8 6Q4 6 0 9ZM7.500 9H14.500Q14 5 11 5Q8 5 7.500 9Z" fill="#0a7bd8" fillRule="evenodd" /></svg>
        </Task>
        <Task $open>
          <svg width="22" height="22"><rect x=".8" y=".8" width="20.400" height="20.400" fill="#061e2b" stroke="#00c0ee" strokeWidth="1.600" /><text x="11" y="15" textAnchor="middle" fontFamily="Open Sans" fontSize="11" fill="#25c9f4">Ps</text></svg>
        </Task>
        <Task><Office color="#1d7145" letter="X" /></Task>
        <Task $open><Office color="#2a579a" letter="W" /></Task>
        <Task><OrangeE /></Task>
        <Task $open><OrangeE badge /></Task>
        <Tray>
          <Cell $w={22}><Line w={14} h={10} s={1.400} color="#fff" d="M1.500 8L7 2L12.500 8" /></Cell>
          <Cell $w={25}><Line w={18} h={16} s={1.200} color="#fff" d="M1 5.500H4L7 2V14L4 10.500H1ZM9.500 5.500Q11 8 9.500 10.500M12 4Q14.500 8 12 12M14.500 2.500Q18 8 14.500 13.500" /></Cell>
          <Cell $w={24}><Line w={18} h={16} s={1.200} color="#fff" d="M5 3H16.500V11.500H3V7M10 11.500V15M6 15H14M1 1H5V5H1ZM3 5V8" /></Cell>
          <Cell $w={34}><Fit w={9}>فا</Fit></Cell>
          <Clock $w={68}>
            <Fit w={51}>ق.ظ 11:25</Fit>
            <Fit w={47} dir="ltr">۱۴۰۴/۱۰/۰۱</Fit>
          </Clock>
          <Cell $w={36}><Line w={18} h={18} s={1.300} color="#fff" d="M1.500 2H16.500V13.500H12L9 16.500V13.500H1.500Z" /></Cell>
          <Cell $w={10} />
          <ShowDesktop />
        </Tray>
      </Taskbar>

      <Seal />
      <Dialog>
        <Cross size={13} color="#4e5a66" w={1.300} />
        <DialogTitle><Fit w={100}>جزئیات جلسه</Fit></DialogTitle>
        <Fit w={498}>Welcome to آموزش و طراحی واحد علوم تجربی-جلسه آنلاین آموزش و طراحی واحد علوم</Fit>
        <Fit w={51}>تجربی....</Fit>
        <Blank />
        <Fit w={148}>این جلسه ضبط خواهد شد</Fit>
        <Blank />
        <Fit w={222}>This server is running <Link>WebinarPlus</Link>.</Fit>
        <Tip><Fit w={32}>بستن</Fit></Tip>
      </Dialog>
      <Frame />
      <RedArrow width="344" height="72" fill={c.red}>
        <path d="M0 29H255Q240 14 236 0Q256 25 343 35.500Q256 48 236 72Q240 58 255 42H0Z" />
      </RedArrow>
      <Caption><Fit w={280}>پنجره را ببندید</Fit></Caption>
    </Screen>
  );
}
